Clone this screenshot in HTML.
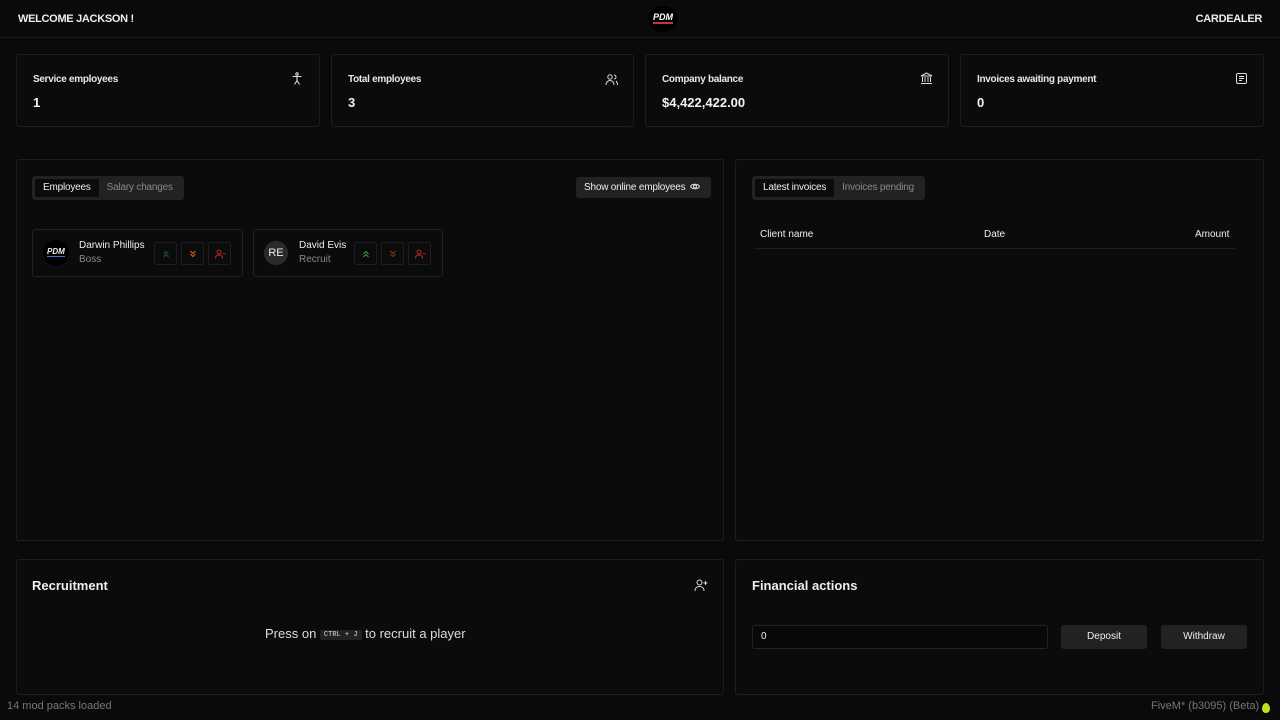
<!DOCTYPE html>
<html><head><meta charset="utf-8"><style>
*{box-sizing:border-box;margin:0;padding:0}
body{width:1280px;height:720px;background:#0a0a0a;color:#eee;font-family:"Liberation Sans",sans-serif;position:relative;overflow:hidden}
.abs{position:absolute}
.card{position:absolute;background:#0b0b0b;border:1px solid #1e1e1e;border-radius:3px}
.lbl{font-size:10px;font-weight:bold;color:#e8e8e8;letter-spacing:-0.3px}
.val{font-size:13px;font-weight:bold;color:#f2f2f2}
.tabs{position:absolute;background:#222;border-radius:3px;height:24px;padding:3px;display:flex;font-size:10px;letter-spacing:-0.2px}
.tabs div{padding:0 8px;line-height:18px;color:#888}
.tabs div.on{background:#0b0b0b;color:#eee;border-radius:2px}
.emp{position:absolute;top:229px;height:48px;border:1px solid #222;border-radius:3px;background:#0b0b0b}
.btn{position:absolute;top:12px;width:23px;height:23px;border:1px solid #1e1e1e;border-radius:2px}
.btn svg{position:absolute;left:6px;top:6px}
</style></head><body>
<div class="abs" style="left:18px;top:13px;font-size:11px;font-weight:bold;letter-spacing:-0.3px">WELCOME JACKSON !</div>
<div class="abs" style="left:648px;top:6px;width:30px;height:26px;border-radius:50%;background:#000"></div>
<div class="abs" style="left:653px;top:12px;font-size:9px;font-weight:bold;font-style:italic;color:#fff;border-bottom:2px solid #c33;line-height:10px">PDM</div>
<div class="abs" style="right:18px;top:13px;font-size:11px;font-weight:bold;letter-spacing:-0.3px">CARDEALER</div>
<div class="abs" style="left:0;top:37px;width:1280px;height:1px;background:#1c1c1c"></div>

<div class="card" style="left:16px;top:54px;width:304px;height:73px"><div class="abs lbl" style="left:16px;top:19px">Service employees</div><div class="abs val" style="left:16px;top:40px">1</div>
<svg class="abs" style="left:274px;top:17px" width="12" height="13" viewBox="0 0 12 13" fill="none" stroke="#ddd" stroke-width="1.1"><circle cx="6" cy="2" r="1.2"/><path d="M1.5 4.5h9M6 4.5v4M6 8.5l-2.5 4M6 8.5l2.5 4"/></svg></div>
<div class="card" style="left:331px;top:54px;width:303px;height:73px"><div class="abs lbl" style="left:16px;top:19px">Total employees</div><div class="abs val" style="left:16px;top:40px">3</div>
<svg class="abs" style="left:273px;top:18px" width="13" height="13" viewBox="0 0 13 13" fill="none" stroke="#ddd" stroke-width="1"><circle cx="5" cy="4" r="2.2"/><path d="M1 12c0-3 2-4.5 4-4.5s4 1.5 4 4.5M9 2a2 2 0 010 4M11 8c1 1 1.5 2 1.5 4"/></svg></div>
<div class="card" style="left:645px;top:54px;width:304px;height:73px"><div class="abs lbl" style="left:16px;top:19px">Company balance</div><div class="abs val" style="left:16px;top:40px">$4,422,422.00</div>
<svg class="abs" style="left:274px;top:17px" width="13" height="13" viewBox="0 0 13 13" fill="none" stroke="#ddd" stroke-width="1"><path d="M1 4L6.5 1 12 4zM2.5 5v5M5 5v5M8 5v5M10.5 5v5M1 11.5h11"/></svg></div>
<div class="card" style="left:960px;top:54px;width:304px;height:73px"><div class="abs lbl" style="left:16px;top:19px">Invoices awaiting payment</div><div class="abs val" style="left:16px;top:40px">0</div>
<svg class="abs" style="left:274px;top:17px" width="13" height="13" viewBox="0 0 13 13" fill="none" stroke="#ddd" stroke-width="1"><rect x="1.5" y="1.5" width="10" height="10" rx="1.5"/><path d="M4 4.5h5M4 6.5h5M4 8.5h3"/></svg></div>

<div class="card" style="left:16px;top:159px;width:708px;height:382px"></div>
<div class="tabs" style="left:32px;top:176px"><div class="on">Employees</div><div>Salary changes</div></div>
<div class="abs" style="left:576px;top:177px;width:135px;height:21px;background:#222;border-radius:3px;font-size:10px;line-height:21px;padding-left:8px;color:#eee;letter-spacing:-0.2px">Show online employees
<svg style="vertical-align:-1px;margin-left:2px" width="10" height="9" viewBox="0 0 10 9" fill="none" stroke="#ddd" stroke-width="1"><path d="M0.5 4.5C2 1.5 8 1.5 9.5 4.5 8 7.5 2 7.5 0.5 4.5z"/><circle cx="5" cy="4.5" r="1.5"/></svg></div>
<div class="emp" style="left:32px;width:211px">
<div class="abs" style="left:10px;top:10px;width:26px;height:26px;border-radius:50%;background:#000"></div>
<div class="abs" style="left:14px;top:18px;font-size:8px;font-weight:bold;font-style:italic;border-bottom:1.5px solid #47c;line-height:8px">PDM</div>
<div class="abs" style="left:46px;top:10px;font-size:10px">Darwin Phillips</div><div class="abs" style="left:46px;top:24px;font-size:10px;color:#888">Boss</div>
<div class="btn" style="left:121px"><svg width="10" height="10" viewBox="0 0 10 10" fill="none" stroke="#245a30" stroke-width="1"><path d="M2.5 5L5 2.5 7.5 5M2.5 8L5 5.5 7.5 8"/></svg></div>
<div class="btn" style="left:148px"><svg width="10" height="10" viewBox="0 0 10 10" fill="none" stroke="#e0601a" stroke-width="1"><path d="M2.5 2L5 4.5 7.5 2M2.5 5L5 7.5 7.5 5"/></svg></div>
<div class="btn" style="left:175px"><svg width="11" height="10" viewBox="0 0 11 10" fill="none" stroke="#b02a2a" stroke-width="1"><circle cx="4" cy="3" r="2"/><path d="M0.5 9.5c0-2.5 1.5-3.5 3.5-3.5s3.5 1 3.5 3.5M7.5 5h3"/></svg></div></div>
<div class="emp" style="left:253px;width:190px">
<div class="abs" style="left:10px;top:11px;width:24px;height:24px;border-radius:50%;background:#2a2a2a;font-size:11px;text-align:center;line-height:24px">RE</div>
<div class="abs" style="left:45px;top:10px;font-size:10px">David Evis</div><div class="abs" style="left:45px;top:24px;font-size:10px;color:#888">Recruit</div>
<div class="btn" style="left:100px"><svg width="10" height="10" viewBox="0 0 10 10" fill="none" stroke="#3a9a4a" stroke-width="1"><path d="M2.5 5L5 2.5 7.5 5M2.5 8L5 5.5 7.5 8"/></svg></div>
<div class="btn" style="left:127px"><svg width="10" height="10" viewBox="0 0 10 10" fill="none" stroke="#7a3a1a" stroke-width="1"><path d="M2.5 2L5 4.5 7.5 2M2.5 5L5 7.5 7.5 5"/></svg></div>
<div class="btn" style="left:154px"><svg width="11" height="10" viewBox="0 0 11 10" fill="none" stroke="#b02a2a" stroke-width="1"><circle cx="4" cy="3" r="2"/><path d="M0.5 9.5c0-2.5 1.5-3.5 3.5-3.5s3.5 1 3.5 3.5M7.5 5h3"/></svg></div></div>

<div class="card" style="left:735px;top:159px;width:529px;height:382px"></div>
<div class="tabs" style="left:752px;top:176px"><div class="on">Latest invoices</div><div>Invoices pending</div></div>
<div class="abs" style="left:760px;top:229px;font-size:10px">Client name</div>
<div class="abs" style="left:984px;top:229px;font-size:10px">Date</div>
<div class="abs" style="left:1195px;top:229px;font-size:10px">Amount</div>
<div class="abs" style="left:754px;top:248px;width:481px;height:1px;background:#1e1e1e"></div>

<div class="card" style="left:16px;top:559px;width:708px;height:136px"></div>
<div class="abs" style="left:32px;top:578px;font-size:13px;font-weight:bold">Recruitment</div>
<svg class="abs" style="left:694px;top:578px" width="14" height="14" viewBox="0 0 14 14" fill="none" stroke="#ddd" stroke-width="1"><circle cx="5.5" cy="4.5" r="2.5"/><path d="M1 13c0-3 2-4.5 4.5-4.5S10 10 10 13M11.5 3v4M9.5 5h4"/></svg>
<div class="abs" style="left:265px;top:626px;font-size:13px;color:#ddd">Press on <span style="display:inline-block;background:#222;border-radius:2px;font-size:7px;padding:1px 4px;vertical-align:2px;font-family:'Liberation Mono',monospace">CTRL + J</span> to recruit a player</div>

<div class="card" style="left:735px;top:559px;width:529px;height:136px"></div>
<div class="abs" style="left:752px;top:578px;font-size:13px;font-weight:bold">Financial actions</div>
<div class="abs" style="left:752px;top:625px;width:296px;height:24px;border:1px solid #222;border-radius:3px;background:#080808;font-size:10px;line-height:22px;padding-left:8px">0</div>
<div class="abs" style="left:1061px;top:625px;width:86px;height:24px;background:#222;border-radius:3px;font-size:10px;line-height:24px;text-align:center">Deposit</div>
<div class="abs" style="left:1161px;top:625px;width:86px;height:24px;background:#222;border-radius:3px;font-size:10px;line-height:24px;text-align:center">Withdraw</div>

<div class="abs" style="left:7px;top:700px;font-size:11px;color:#777">14 mod packs loaded</div>
<div class="abs" style="left:1151px;top:700px;font-size:11px;color:#777">FiveM* (b3095) (Beta)</div>
<div class="abs" style="left:1262px;top:703px;width:8px;height:10px;border-radius:50% 50% 50% 50%/60% 60% 40% 40%;background:#c8dc1e"></div>
</body></html>
